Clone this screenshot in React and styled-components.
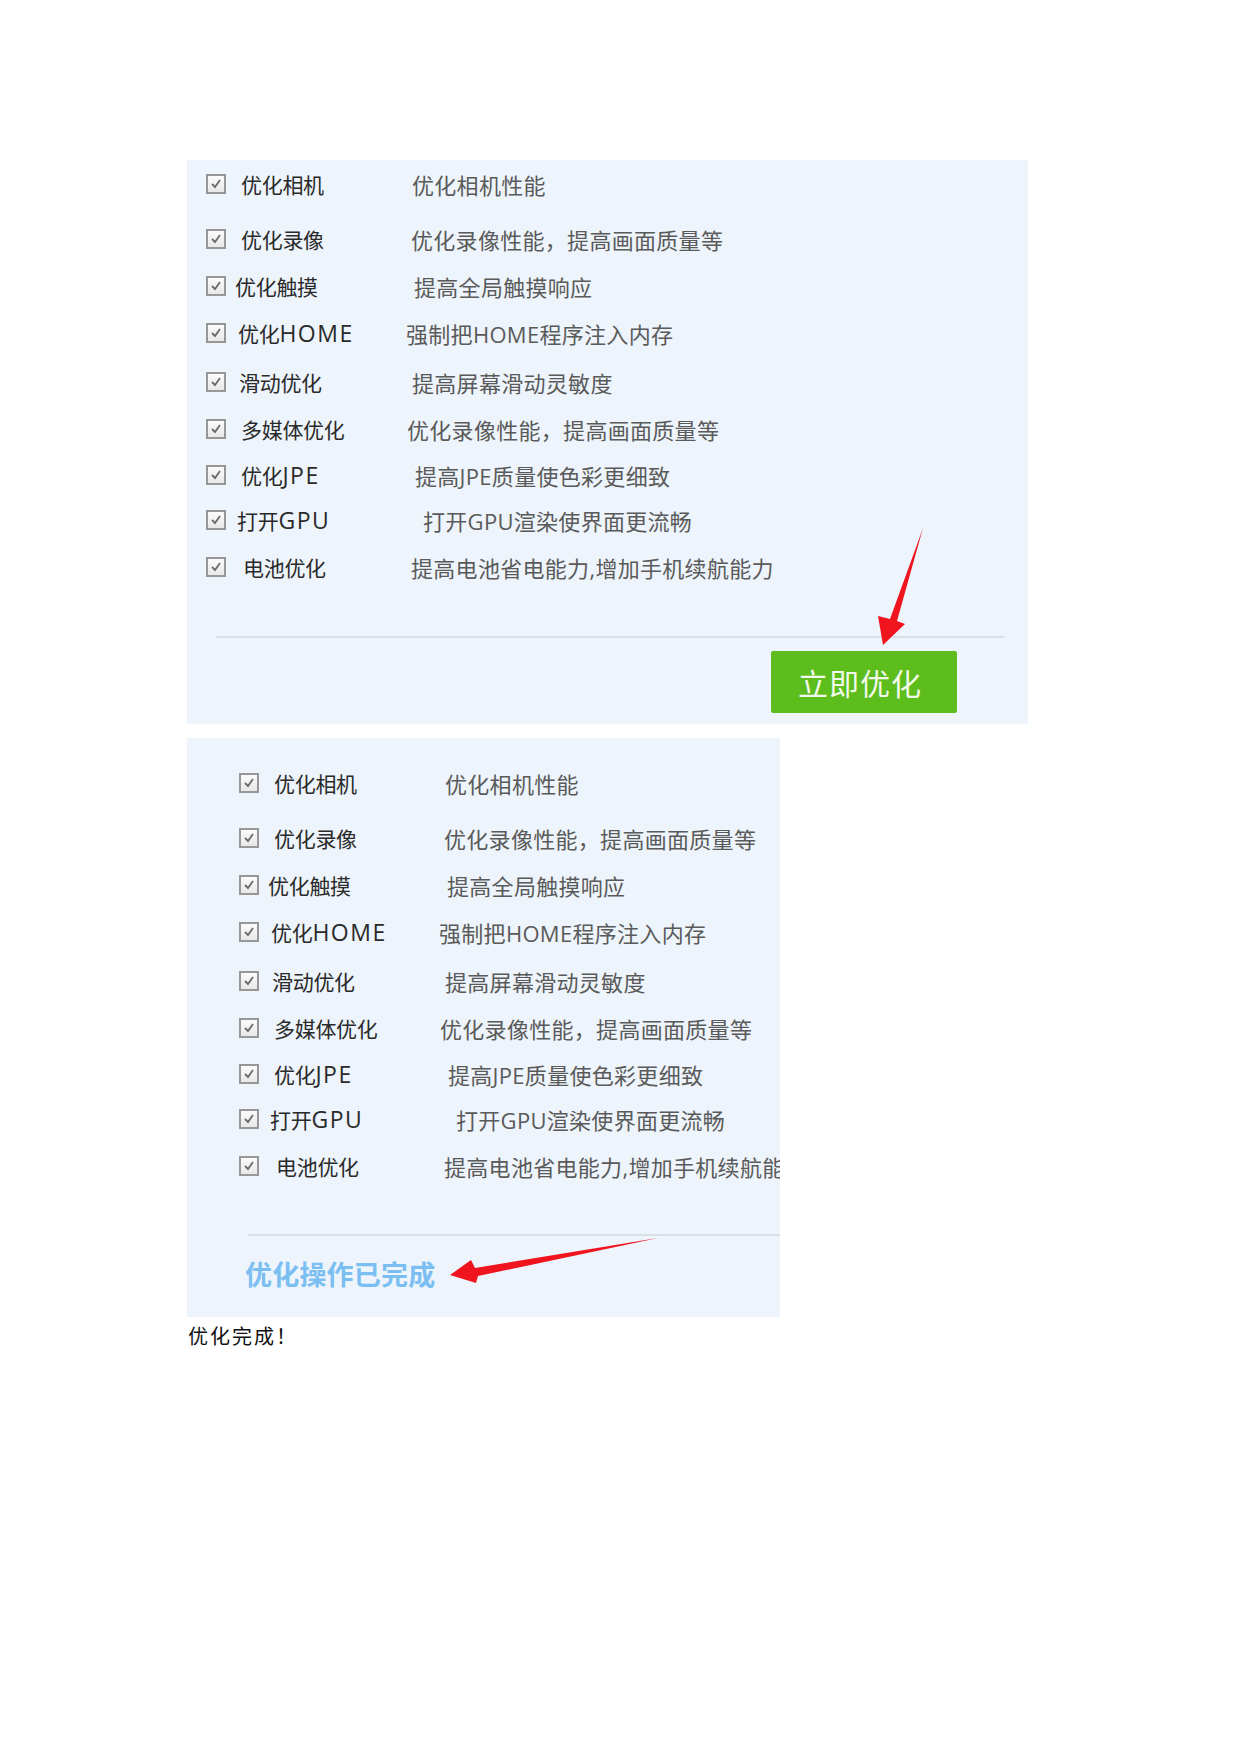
import React from "react";
import styled, { createGlobalStyle } from "styled-components";

const Global = createGlobalStyle`
  html, body { margin: 0; padding: 0; background: #ffffff; }
  body { font-family: "Open Sans", "Noto Sans CJK SC", sans-serif; }
`;

const Page = styled.main`
  padding: 160px 0 40px 187px;
  display: flex;
  flex-direction: column;
  align-items: flex-start;
`;

const Panel = styled.section`
  position: relative;
  box-sizing: border-box;
  width: ${(p) => p.$w}px;
  height: ${(p) => p.$h}px;
  margin-top: ${(p) => p.$mt || 0}px;
  padding: ${(p) => p.$pt}px 0 0 ${(p) => p.$pl}px;
  background: #edf4fb;
  overflow: hidden;
  display: flex;
  flex-direction: column;
`;

const List = styled.ul`
  list-style: none;
  margin: 0;
  padding: 0;
  display: flex;
  flex-direction: column;
`;

const Row = styled.li`
  display: grid;
  grid-template-columns: 20px 186px auto;
  align-items: center;
  height: 30px;
  margin-top: ${(p) => p.$mt}px;
  white-space: nowrap;
`;

const Box = styled.span`
  box-sizing: border-box;
  width: 20px;
  height: 20px;
  border: 2px solid #979797;
  background: linear-gradient(#fbfbfb, #e8e8e8);
  display: flex;
  align-items: center;
  justify-content: center;
  transform: translateY(-1px);
  svg { display: block; }
`;

const Label = styled.span`
  margin-left: ${(p) => p.$x}px;
  font-family: "Open Sans", "Noto Sans CJK SC", sans-serif;
  font-size: 21px;
  line-height: 30px;
  color: #2a2a2a;
  letter-spacing: -0.3px;
`;

const Latin = styled.span`
  font-size: 23px;
  letter-spacing: 1.5px;
`;

const Desc = styled.span`
  margin-left: ${(p) => p.$x}px;
  font-family: "Open Sans", "Noto Sans CJK SC", sans-serif;
  font-size: 22px;
  line-height: 30px;
  color: #5a5a5a;
  letter-spacing: 0.3px;
`;

const Divider = styled.hr`
  margin: ${(p) => p.$mt}px 0 0 ${(p) => p.$ml}px;
  width: 788px;
  height: 2px;
  border: 0;
  background: #d8e0e6;
  flex: none;
`;

const ActionBar = styled.div`
  display: flex;
  justify-content: flex-end;
  margin: 13px 71px 0 0;
`;

const GoButton = styled.button`
  width: 186px;
  height: 62px;
  border: 0;
  border-radius: 2px;
  background: #5cbd1c;
  color: #f1f9ea;
  font-family: "Noto Sans CJK SC", sans-serif;
  font-size: 30px;
  letter-spacing: 1px;
  padding: 0 8px 0 0;
  cursor: pointer;
`;

const DoneText = styled.div`
  margin: 20px 0 0 6px;
  font-family: "Noto Sans CJK SC", sans-serif;
  font-size: 27px;
  line-height: 36px;
  font-weight: 700;
  color: #7bbff2;
  letter-spacing: 0.2px;
`;

const Caption = styled.p`
  margin: 7px 0 0 1px;
  font-family: "Liberation Serif", "Noto Sans CJK SC", serif;
  font-size: 20px;
  line-height: 26px;
  color: #111;
  letter-spacing: 2px;
`;

const Arrow = styled.svg`
  position: absolute;
  left: ${(p) => p.$x}px;
  top: ${(p) => p.$y}px;
  overflow: visible;
`;

const rows = [
  { name: "优化相机", desc: "优化相机性能", mt: 0, lx: 15, dx: 0 },
  { name: "优化录像", desc: "优化录像性能，提高画面质量等", mt: 25, lx: 15, dx: -1 },
  { name: "优化触摸", desc: "提高全局触摸响应", mt: 17, lx: 9, dx: 2 },
  { name: "优化HOME", desc: "强制把HOME程序注入内存", mt: 16, lx: 12, dx: -6 },
  { name: "滑动优化", desc: "提高屏幕滑动灵敏度", mt: 20, lx: 13, dx: 0 },
  { name: "多媒体优化", desc: "优化录像性能，提高画面质量等", mt: 17, lx: 15, dx: -5 },
  { name: "优化JPE", desc: "提高JPE质量使色彩更细致", mt: 15, lx: 15, dx: 3 },
  { name: "打开GPU", desc: "打开GPU渲染使界面更流畅", mt: 15, lx: 11, dx: 11 },
  { name: "电池优化", desc: "提高电池省电能力,增加手机续航能力", mt: 18, lx: 17, dx: -1 },
];

function withLatin(text) {
  return text
    .split(/([A-Za-z]+)/)
    .filter(Boolean)
    .map((part, i) => (/^[A-Za-z]+$/.test(part) ? <Latin key={i}>{part}</Latin> : part));
}

function Check() {
  return (
    <Box>
      <svg width="12" height="12" viewBox="0 0 12 12">
        <polyline points="2,6 5,9 10,2" fill="none" stroke="#6a6a6a" strokeWidth="1.8" />
      </svg>
    </Box>
  );
}

function OptionList() {
  return (
    <List>
      {rows.map((r) => (
        <Row key={r.name} $mt={r.mt}>
          <Check />
          <Label $x={r.lx}>{withLatin(r.name)}</Label>
          <Desc $x={r.dx}>{r.desc}</Desc>
        </Row>
      ))}
    </List>
  );
}

export default function App() {
  return (
    <>
      <Global />
      <Page>
        <Panel $w={841} $h={564} $pt={10} $pl={19}>
          <OptionList />
          <Divider $mt={53} $ml={10} />
          <ActionBar>
            <GoButton>立即优化</GoButton>
          </ActionBar>
          <Arrow $x={683} $y={360} width="60" height="130" viewBox="0 0 60 130">
            <polygon points="53,8 27,101 35,104 13,125 8,96 20,99" fill="#f0141e" />
          </Arrow>
        </Panel>

        <Panel $w={593} $h={579} $mt={14} $pt={31} $pl={52}>
          <OptionList />
          <Divider $mt={52} $ml={9} />
          <DoneText>优化操作已完成</DoneText>
          <Arrow $x={258} $y={494} width="220" height="60" viewBox="0 0 220 60">
            <polygon points="213,6 30,36 26,28 5,43 31,51 33,44" fill="#f0141e" />
          </Arrow>
        </Panel>

        <Caption>优化完成！</Caption>
      </Page>
    </>
  );
}
